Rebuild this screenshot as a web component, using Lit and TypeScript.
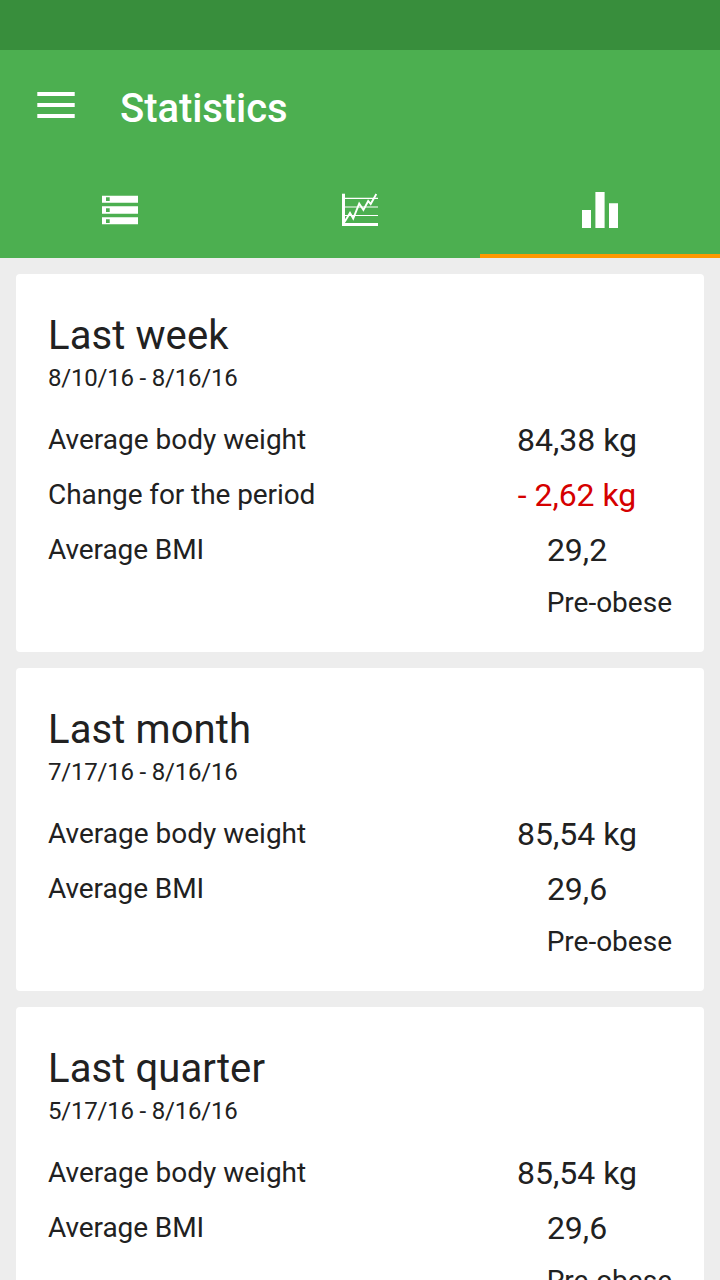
import { LitElement, html, css, nothing } from "lit";
import { customElement, property } from "lit/decorators.js";

interface Period {
  title: string;
  range: string;
  weight: string;
  change?: string;
  bmi: string;
  category: string;
}

const periods: Period[] = [
  { title: "Last week", range: "8/10/16 - 8/16/16", weight: "84,38 kg", change: "- 2,62 kg", bmi: "29,2", category: "Pre-obese" },
  { title: "Last month", range: "7/17/16 - 8/16/16", weight: "85,54 kg", bmi: "29,6", category: "Pre-obese" },
  { title: "Last quarter", range: "5/17/16 - 8/16/16", weight: "85,54 kg", bmi: "29,6", category: "Pre-obese" },
];

@customElement("stat-card")
export class StatCard extends LitElement {
  @property({ attribute: false }) period!: Period;

  static styles = css`
    :host {
      display: block;
      flex: none;
      box-sizing: border-box;
      padding: 32px 32px 23px;
      border-radius: 4px;
      background: #fff;
      color: #212121;
      white-space: nowrap;
    }
    .title { font-size: 40px; line-height: 60px; letter-spacing: 0.1px; }
    .range { font-size: 24px; line-height: 24px; letter-spacing: -0.21px; margin-bottom: 22px; }
    .row { display: flex; justify-content: space-between; height: 55px; line-height: 55px; }
    .label { font-size: 28px; }
    .label.tight { letter-spacing: -0.08px; }
    .value { width: 190px; text-align: center; font-size: 32px; line-height: 57px; }
    .loss { color: #d50000; letter-spacing: -0.04px; }
    .category { text-align: right; font-size: 28px; line-height: 52px; }
  `;

  render() {
    const p = this.period;
    return html`
      <div class="title">${p.title}</div>
      <div class="range">${p.range}</div>
      <div class="row"><span class="label">Average body weight</span><span class="value">${p.weight}</span></div>
      ${p.change
        ? html`<div class="row"><span class="label tight">Change for the period</span><span class="value loss">${p.change}</span></div>`
        : nothing}
      <div class="row"><span class="label tight">Average BMI</span><span class="value">${p.bmi}</span></div>
      <div class="category">${p.category}</div>
    `;
  }
}

@customElement("app-root")
export class AppRoot extends LitElement {
  static styles = css`
    :host {
      display: flex;
      flex-direction: column;
      height: 1280px;
      overflow: hidden;
      background: #ededed;
      font-family: Roboto, sans-serif;
    }
    .status { flex: none; height: 50px; background: #388e3c; }
    .header { flex: none; background: #4caf50; color: #fff; }
    .bar { display: flex; align-items: center; height: 112px; padding-left: 37px; }
    .menu { width: 38px; height: 26px; margin-bottom: 2px; }
    .heading { margin: 6px 0 0 45px; font-size: 40px; font-weight: 500; line-height: 48px; letter-spacing: -0.06px; }
    .tabs { display: grid; grid-template-columns: repeat(3, 1fr); height: 96px; }
    .tab { display: flex; align-items: center; justify-content: center; box-sizing: border-box; }
    .active { border-bottom: 4px solid #ff9800; padding-top: 4px; }
    .icon { width: 48px; height: 48px; }
    .list { display: flex; flex-direction: column; gap: 16px; padding: 16px; }
    svg { display: block; }
  `;

  render() {
    return html`
      <div class="status"></div>
      <header class="header">
        <div class="bar">
          <svg class="menu" viewBox="0 0 38 26" fill="#fff">
            <path d="M.3 0h37.4v4H.3zM.3 11h37.4v4H.3zM.3 22h37.4v4H.3z" />
          </svg>
          <div class="heading">Statistics</div>
        </div>
        <nav class="tabs">
          <div class="tab">
            <svg class="icon" viewBox="0 0 48 48" fill="#fff">
              <path fill-rule="evenodd" d="M6 9.7h36v7.1H6zM10 11.2v3.7h3.7v-3.7zM6 20.2h36v7.6H6zM10 22.2v3.7h3.7v-3.7zM6 31.2h36v7.1H6zM10 33.2v3.7h3.7v-3.7z" />
            </svg>
          </div>
          <div class="tab">
            <svg class="icon" viewBox="0 0 48 48" fill="none" stroke="#fff">
              <path d="M7.5 7.7v32.3" stroke-width="3" />
              <path d="M6 38.5h36" stroke-width="3" />
              <path d="M8 12.4h34M8 21h34M8 29.5h34" stroke-width="1.2" />
              <path d="M8.5 36L14 26.9l3.2 5.6L23.2 17.6l4.2 6.4L32.2 15l2.5 3L40.3 8" stroke-width="1.9" />
            </svg>
          </div>
          <div class="tab active">
            <svg class="icon" viewBox="0 0 48 48" fill="#fff">
              <path d="M6 24h9v18H6zM19.4 6h9.2v36h-9.2zM33 17.2h9v24.8h-9z" />
            </svg>
          </div>
        </nav>
      </header>
      <main class="list">
        ${periods.map((p) => html`<stat-card .period=${p}></stat-card>`)}
      </main>
    `;
  }
}
